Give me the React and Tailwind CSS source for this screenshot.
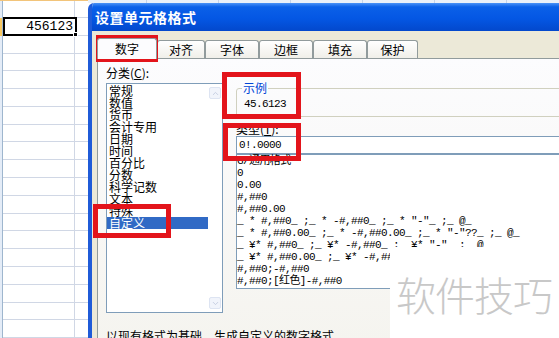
import { ChevronUp, ChevronDown } from 'lucide-react';

const cjk = "font-['Noto_Sans_CJK_SC','Noto_Sans',sans-serif]";
const mono = "font-['Liberation_Mono','Noto_Sans_CJK_SC',monospace]";

const categories = ['常规', '数值', '货币', '会计专用', '日期', '时间', '百分比', '分数', '科学记数', '文本', '特殊', '自定义'];

const formats = [
  'G/通用格式',
  '0',
  '0.00',
  '#,##0',
  '#,##0.00',
  '_ * #,##0_ ;_ * -#,##0_ ;_ * "-"_ ;_ @_',
  '_ * #,##0.00_ ;_ * -#,##0.00_ ;_ * "-"??_ ;_ @_',
  '_ ¥* #,##0_ ;_ ¥* -#,##0_ ;_ ¥* "-"_ ;_ @_',
  '_ ¥* #,##0.00_ ;_ ¥* -#,##0.00_ ;_ ¥* "-"??_ ;_ @_',
  '#,##0;-#,##0',
  '#,##0;[红色]-#,##0',
];

const tabs = [
  { label: '数字', w: 'w-[60px]', active: true },
  { label: '对齐', w: 'w-[48px]' },
  { label: '字体', w: 'w-[54px]' },
  { label: '边框', w: 'w-[54px]' },
  { label: '填充', w: 'w-[54px]' },
  { label: '保护', w: 'w-[51px]' },
];

const Sheet = () => {
  const rows = Array.from({ length: 19 });
  return (
    <div className="w-[88px] shrink-0 flex flex-col bg-white">
      <div className="h-[1px] bg-[#f2c47a]" />
      {rows.map((_, i) => (
        <div key={i} className={`flex ${i === 0 ? 'h-[17px]' : 'h-[18px]'}`}>
          <div className={`w-[3px] border-r border-[#9eb6ce] ${i === 1 ? 'bg-[#f8c862]' : 'bg-[#e4ecf7]'}`} />
          {i === 1 ? (
            <div className="relative w-[74px] h-[19px] -mt-[1px] border-2 border-black flex items-center justify-end pr-[2px]">
              <span className={`${mono} text-[13px] leading-none text-black`}>456123</span>
              <div className="absolute -right-[3px] -bottom-[3px] w-[5px] h-[5px] bg-black border border-white" />
            </div>
          ) : (
            <div className="w-[72px] border-r border-b border-[#d0d7e5]" />
          )}
          <div className="flex-1 border-b border-[#d0d7e5]" />
        </div>
      ))}
    </div>
  );
};

const Tab = ({ label, w, active }) => {
  if (active) {
    return (
      <div className={`${w} h-[21px] -mb-[1px] relative z-10 bg-[#fcfcfe] border border-b-0 border-[#919b9c] rounded-t-[3px] flex items-center justify-center text-[12px] text-black`}>
        {label}
      </div>
    );
  }
  return (
    <div className={`${w} h-[18px] bg-[linear-gradient(to_bottom,#ffffff,#f0efe9)] border border-b-0 border-[#919b9c] rounded-t-[3px] flex items-center justify-center text-[12px] text-black`}>
      {label}
    </div>
  );
};

const ScrollBtn = ({ Icon }) => (
  <div className="w-[12px] h-[12px] mx-auto rounded-[2px] border border-[#dde4f2] bg-[#f1f4fb] flex items-center justify-center">
    <Icon size={9} strokeWidth={2.5} className="text-[#c4cde0]" />
  </div>
);

const Dialog = () => (
  <div className="flex-1 min-w-0 flex flex-col">
    <div className="h-[3px] shrink-0 flex bg-[#eaf0f9]">
      <div className="w-[59px] shrink-0 border-r border-[#c5d3e8]" />
      {[0, 1, 2, 3, 4, 5].map((i) => (
        <div key={i} className="w-[72px] shrink-0 border-r border-[#c5d3e8]" />
      ))}
    </div>
    <div className="flex-1 flex flex-col border-l-4 border-[#1f5bd8] rounded-tl-[6px] overflow-hidden">
      <div className="h-[28px] shrink-0 bg-[linear-gradient(to_bottom,#4a92f7_0%,#0b60e8_14%,#0457e4_55%,#0348cc_100%)] flex items-center pl-[3px]">
        <span className={`${cjk} text-[14px] font-bold text-white tracking-[0.5px]`}>设置单元格格式</span>
      </div>
      <div className={`${cjk} flex-1 flex flex-col bg-[#ece9d8] pl-[5px] pt-[5px]`}>
        <div className="flex items-end h-[22px] shrink-0">
          {tabs.map((t) => (
            <Tab key={t.label} {...t} />
          ))}
        </div>
        <div className="flex-1 flex flex-col border-l border-t border-[#919b9c] bg-[linear-gradient(to_bottom,#fcfcfe,#f5f4ef)] pl-[8px] pt-[7px]">
          <div className="flex">
            <div className="w-[117px] shrink-0 flex flex-col">
              <div className="h-[14px] text-[12px] leading-[14px] text-black">
                分类(<u>C</u>):
              </div>
              <div className="mt-[3px] h-[230px] border border-[#7f9db9] bg-white flex">
                <div className="w-[101px] pt-[1px]">
                  {categories.map((c) => (
                    <div
                      key={c}
                      className={`h-[12px] leading-[12px] text-[12px] pl-[2px] ${c === '自定义' ? 'bg-[#316ac5] text-white' : 'text-black'}`}
                    >
                      {c}
                    </div>
                  ))}
                </div>
                <div className="flex-1 flex flex-col justify-between pt-[3px] pb-[3px]">
                  <ScrollBtn Icon={ChevronUp} />
                  <ScrollBtn Icon={ChevronDown} />
                </div>
              </div>
            </div>
            <div className="ml-[13px] w-[400px] shrink-0 flex flex-col">
              <div className="relative mt-[22px] h-[29px] border border-[#d0d0bf] rounded-[3px]">
                <span className="absolute left-[5px] -top-[8px] px-[1px] bg-[#fcfcfe] text-[12px] leading-[14px] text-[#0046d5]">示例</span>
                <div className={`${mono} pl-[7px] pt-[9px] text-[11px] leading-[12px] tracking-[-0.6px] text-black`}>45.6123</div>
              </div>
              <div className="mt-[5px] h-[14px] text-[12px] leading-[14px] text-black">
                类型(<u>T</u>):
              </div>
              <div className={`${mono} h-[18px] border border-[#7f9db9] bg-white pl-[2px] text-[11px] leading-[16px] tracking-[-0.6px] text-black`}>
                0!.0000
              </div>
              <div className={`${mono} h-[135px] border border-r-0 border-[#7f9db9] bg-white text-[11px] leading-[12px] tracking-[-0.6px] text-black`}>
                {formats.map((f) => (
                  <div key={f} className="h-[12px] whitespace-pre">{f}</div>
                ))}
              </div>
            </div>
          </div>
          <div className="mt-[16px] text-[12px] leading-[14px] text-black whitespace-nowrap">
            以现有格式为基础，生成自定义的数字格式。
          </div>
        </div>
      </div>
    </div>
  </div>
);

const App = () => (
  <div className={`${cjk} relative w-[559px] h-[338px] overflow-hidden flex bg-white`}>
    <Sheet />
    <Dialog />

    {/* annotation boxes */}
    <div className="absolute left-[96px] top-[35px] w-[62px] h-[27px] border-[5px] border-[#e3141b]" />
    <div className="absolute left-[222px] top-[72px] w-[79px] h-[47px] border-[5px] border-[#e3141b]" />
    <div className="absolute left-[223px] top-[123px] w-[78px] h-[38px] border-[5px] border-[#e3141b]" />
    <div className="absolute left-[93px] top-[204px] w-[78px] h-[34px] border-[5px] border-[#e3141b]" />

    {/* watermark */}
    <div className="absolute left-[390px] top-[247px] right-0 bottom-0 bg-white" />
    <div className="absolute left-[396px] top-[272px] text-[40px] leading-[44px] text-[#c8c8c8] font-light tracking-[-1px]">
      软件技巧
    </div>
  </div>
);

export default App;
